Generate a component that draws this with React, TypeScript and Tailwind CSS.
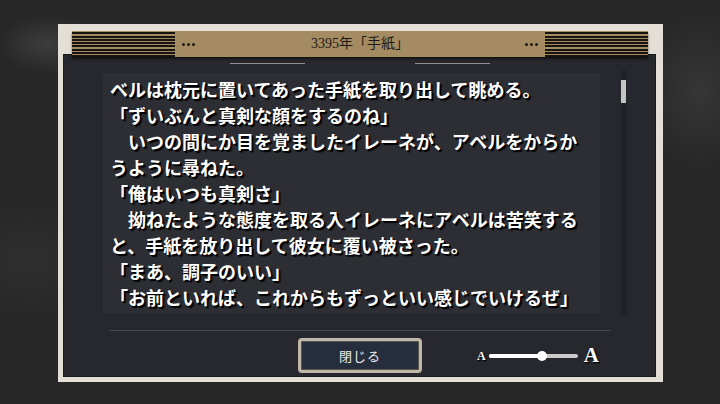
const LINES = [
  'ベルは枕元に置いてあった手紙を取り出して眺める。',
  '「ずいぶんと真剣な顔をするのね」',
  '　いつの間にか目を覚ましたイレーネが、アベルをからか',
  'うように尋ねた。',
  '「俺はいつも真剣さ」',
  '　拗ねたような態度を取る入イレーネにアベルは苦笑する',
  'と、手紙を放り出して彼女に覆い被さった。',
  '「まあ、調子のいい」',
  '「お前といれば、これからもずっといい感じでいけるぜ」',
]

function Stripes() {
  return (
    <div className="w-[103px] h-full bg-[repeating-linear-gradient(to_bottom,#a48b62_0px,#a48b62_1.3px,#17140f_1.3px,#17140f_3.3px)]" />
  )
}

function Dots() {
  return (
    <div className="flex gap-[2px]">
      <span className="w-[3px] h-[3px] rounded-full bg-[#1c1812]" />
      <span className="w-[3px] h-[3px] rounded-full bg-[#1c1812]" />
      <span className="w-[3px] h-[3px] rounded-full bg-[#1c1812]" />
    </div>
  )
}

function Header() {
  return (
    <div className="relative z-10 mx-[14px] mr-[15px] h-[26px] flex items-center bg-[#a48b62] shadow-[0_2px_2px_rgba(0,0,0,0.55)]">
      <Stripes />
      <div className="ml-[7px]">
        <Dots />
      </div>
      <div className="flex-1 text-center text-[14px] leading-none text-[#1e1a14] font-['Liberation_Serif','Noto_Sans_CJK_JP',serif]">
        3395年「手紙」
      </div>
      <div className="mr-[7px]">
        <Dots />
      </div>
      <Stripes />
    </div>
  )
}

function Slider() {
  return (
    <div className="flex items-center font-['Liberation_Serif',serif] font-bold text-white [text-shadow:1px_1px_0_#000,1px_1px_2px_#000]">
      <span className="text-[12px] leading-none">A</span>
      <div className="relative ml-[3px] w-[89px] h-[4px] rounded-full bg-[#c9c9c9]">
        <div className="w-[53px] h-full rounded-full bg-white" />
        <div className="absolute left-[48px] top-[-3px] w-[10px] h-[10px] rounded-full bg-white" />
      </div>
      <span className="ml-[6px] text-[21px] leading-none">A</span>
    </div>
  )
}

export default function App() {
  return (
    <div className="w-[720px] h-[404px] overflow-hidden bg-[#272727] bg-[radial-gradient(ellipse_50px_30px_at_48px_44px,#3d3d3d,transparent),radial-gradient(ellipse_60px_80px_at_700px_90px,#363636,transparent),radial-gradient(ellipse_80px_60px_at_30px_260px,#2f2f2f,transparent)] pt-[24px] pl-[58px]">
      <div className="w-[605px] h-[358px] flex flex-col bg-[#e3ded6] pt-[7px] pb-[5px]">
        <Header />
        <div className="flex-1 ml-[5px] mr-[7px] mt-[-3px] flex flex-col bg-[#27282e] border border-[#1a1b1f]">
          <div className="flex mt-[8px] h-px">
            <div className="ml-[166px] w-[75px] bg-[#8e8e90]" />
            <div className="ml-[110px] w-[75px] bg-[#8e8e90]" />
          </div>
          <div className="flex mt-[9px]">
            <div className="ml-[39px] w-[497px] h-[240px] overflow-hidden bg-[#2d2e34] pl-[7px] pt-[3px] text-[18px] leading-[26px] font-bold text-white font-['Noto_Sans_CJK_JP',sans-serif] [text-shadow:1px_1px_0_#000,2px_2px_1px_#000]">
              {LINES.map((line, i) => (
                <div key={i} className="whitespace-nowrap">{line}</div>
              ))}
            </div>
            <div className="relative ml-[21px] mt-[-3px] w-[6px] h-[245px] bg-[#222328]">
              <div className="absolute left-0 top-[10px] w-[5px] h-[23px] bg-[#c4c4c4]" />
            </div>
          </div>
          <div className="mt-[15px] ml-[45px] w-[502px] h-px bg-[#454851]" />
          <div className="flex items-center mt-[7px]">
            <div className="ml-[234px] w-[124px] h-[35px] rounded-[4px] border-[3px] border-[#bfb8aa] shadow-[inset_0_0_0_1px_#5c584f] bg-[#262d3d] flex items-center justify-center">
              <span className="text-[13px] text-[#ececec] font-['Noto_Sans_CJK_JP',sans-serif] tracking-[1px]">閉じる</span>
            </div>
            <div className="ml-[55px]">
              <Slider />
            </div>
          </div>
        </div>
      </div>
    </div>
  )
}
